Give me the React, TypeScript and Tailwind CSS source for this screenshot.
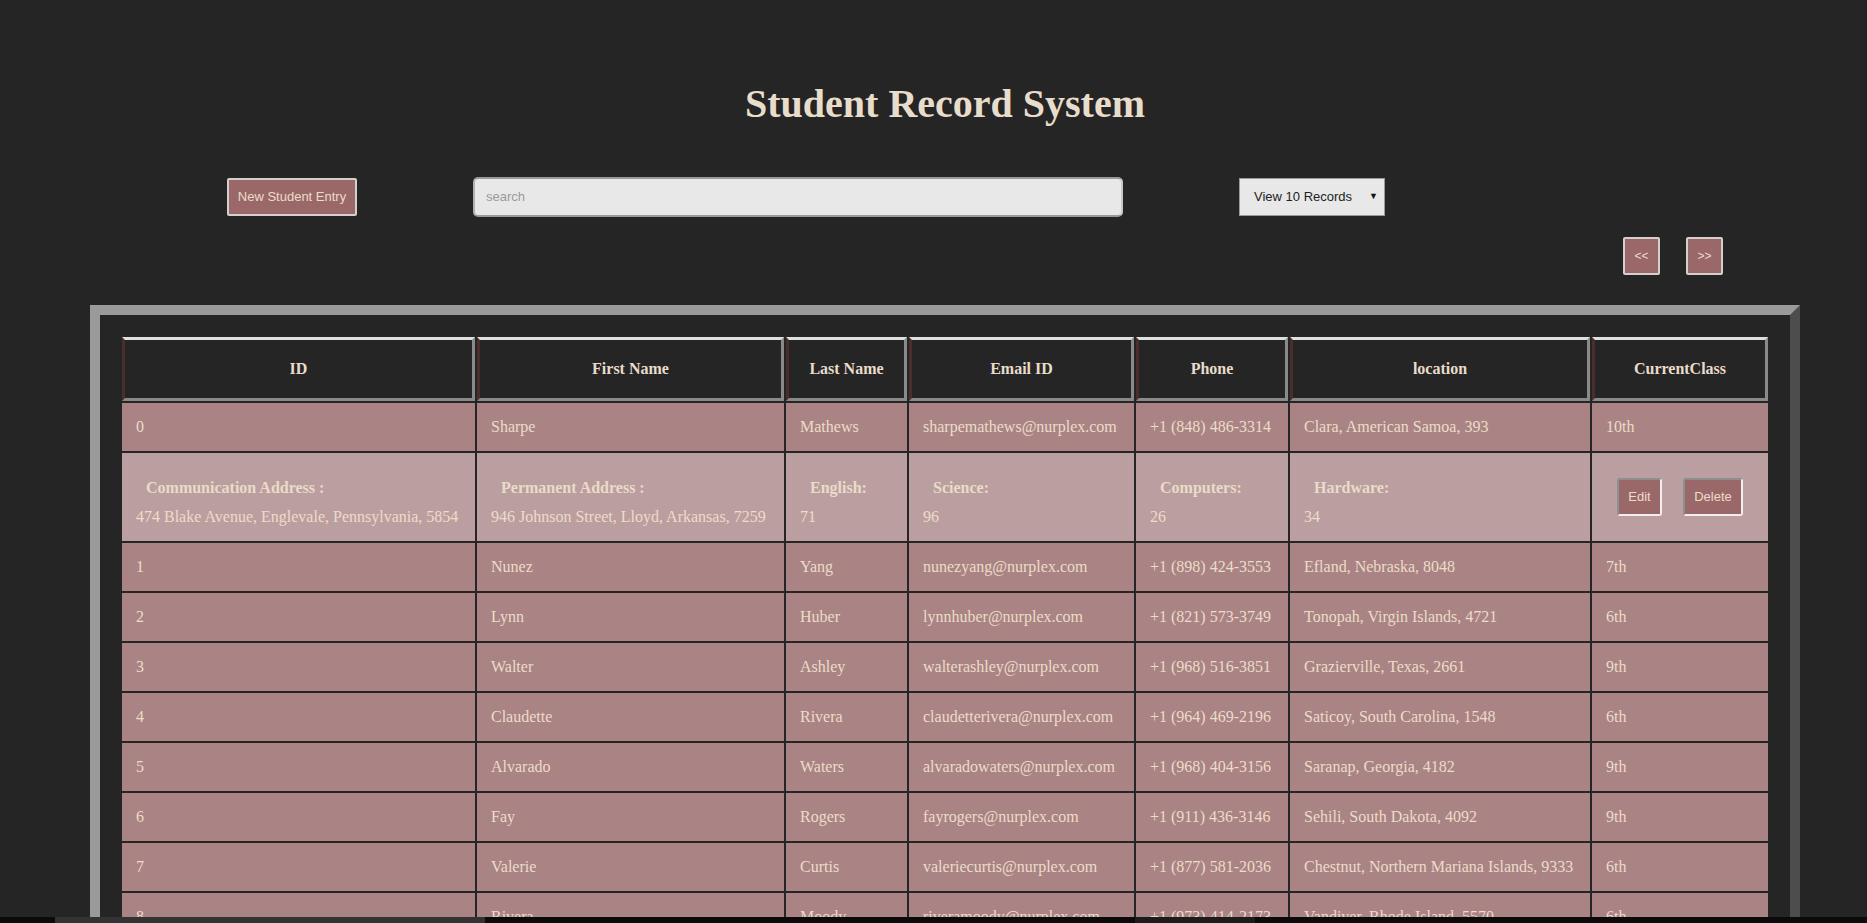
import React from "react";

const serif = { fontFamily: '"Liberation Serif", "Times New Roman", serif' };
const sans = { fontFamily: '"Liberation Sans", Arial, sans-serif' };

type Row = [string, string, string, string, string, string, string];

const rows: Row[] = [
  ["0", "Sharpe", "Mathews", "sharpemathews@nurplex.com", "+1 (848) 486-3314", "Clara, American Samoa, 393", "10th"],
  ["1", "Nunez", "Yang", "nunezyang@nurplex.com", "+1 (898) 424-3553", "Efland, Nebraska, 8048", "7th"],
  ["2", "Lynn", "Huber", "lynnhuber@nurplex.com", "+1 (821) 573-3749", "Tonopah, Virgin Islands, 4721", "6th"],
  ["3", "Walter", "Ashley", "walterashley@nurplex.com", "+1 (968) 516-3851", "Grazierville, Texas, 2661", "9th"],
  ["4", "Claudette", "Rivera", "claudetterivera@nurplex.com", "+1 (964) 469-2196", "Saticoy, South Carolina, 1548", "6th"],
  ["5", "Alvarado", "Waters", "alvaradowaters@nurplex.com", "+1 (968) 404-3156", "Saranap, Georgia, 4182", "9th"],
  ["6", "Fay", "Rogers", "fayrogers@nurplex.com", "+1 (911) 436-3146", "Sehili, South Dakota, 4092", "9th"],
  ["7", "Valerie", "Curtis", "valeriecurtis@nurplex.com", "+1 (877) 581-2036", "Chestnut, Northern Mariana Islands, 9333", "6th"],
  ["8", "Rivera", "Moody", "riveramoody@nurplex.com", "+1 (973) 414-2173", "Vandiver, Rhode Island, 5570", "6th"],
  ["9", "Hester", "Bond", "hesterbond@nurplex.com", "+1 (990) 512-3318", "Tuskahoma, Ohio, 6012", "8th"],
];

const headers = ["ID", "First Name", "Last Name", "Email ID", "Phone", "location", "CurrentClass"];

const details: [string, string][] = [
  ["Communication Address :", "474 Blake Avenue, Englevale, Pennsylvania, 5854"],
  ["Permanent Address :", "946 Johnson Street, Lloyd, Arkansas, 7259"],
  ["English:", "71"],
  ["Science:", "96"],
  ["Computers:", "26"],
  ["Hardware:", "34"],
];

function DataRow({ r }: { r: Row }) {
  return (
    <tr>
      {r.map((c, i) => (
        <td
          key={i}
          className="h-[48px] whitespace-nowrap bg-[#aa8384] px-[14px] py-0 align-middle text-[16px] text-[#ecdcc9]"
        >
          {c}
        </td>
      ))}
    </tr>
  );
}

export default function App() {
  return (
    <div className="h-screen overflow-hidden bg-[#252525] pl-[23px]">
      <h1
        className="pt-[81px] text-center text-[40px] font-bold leading-[46px] text-[#e8dccb]"
        style={serif}
      >
        Student Record System
      </h1>

      <div className="mt-[50px] flex h-[40px] items-center" style={sans}>
        <button className="ml-[204px] h-[38px] w-[130px] rounded-[2px] border-2 border-[#d6d0cc] bg-[#9a6869] text-[13px] text-[#ecdcc9]">
          New Student Entry
        </button>
        <div className="ml-[116px] flex h-[40px] w-[650px] items-center rounded-[5px] border-2 border-t-[#9a9a9a] border-l-[#b0b0b0] border-r-[#c8c8c8] border-b-[#9a9a9a] bg-[#e8e8e8] pl-[11px] text-[13px] text-[#9a9a9a]">
          search
        </div>
        <div className="ml-[116px] flex h-[38px] w-[146px] items-center justify-between border border-[#9a9a9a] bg-[#e8e8e8] pl-[14px] pr-[6px] text-[13px] text-[#222]">
          <span>View 10 Records</span>
          <span className="text-[9px] text-[#111]">▼</span>
        </div>
      </div>

      <div className="mt-[20px] flex justify-end gap-[26px] pr-[144px]" style={sans}>
        <button className="h-[38px] w-[37px] rounded-[2px] border-2 border-[#d6d0cc] bg-[#9a6869] text-[12px] text-[#ecdcc9]">
          &lt;&lt;
        </button>
        <button className="h-[38px] w-[37px] rounded-[2px] border-2 border-[#d6d0cc] bg-[#9a6869] text-[12px] text-[#ecdcc9]">
          &gt;&gt;
        </button>
      </div>

      <div className="mx-auto mt-[30px] w-[1710px] border-[10px] border-t-[#9a9a9a] border-l-[#9a9a9a] border-r-[#4d4d4d] border-b-[#4d4d4d] bg-[#252525] p-[20px]">
        <table className="w-full table-fixed border-separate border-spacing-[2px]" style={serif}>
          <colgroup>
            <col className="w-[353px]" />
            <col className="w-[307px]" />
            <col className="w-[121px]" />
            <col className="w-[225px]" />
            <col className="w-[152px]" />
            <col className="w-[300px]" />
            <col className="w-[176px]" />
          </colgroup>
          <thead>
            <tr>
              {headers.map((h) => (
                <th
                  key={h}
                  className="h-[64px] border-[3px] border-t-[#e0e0e0] border-l-[#4b2d2d] border-r-[#8a8a8a] border-b-[#8a8a8a] bg-[#252525] text-center align-middle text-[16px] font-bold text-[#e8dccb]"
                >
                  {h}
                </th>
              ))}
            </tr>
          </thead>
          <tbody>
            <DataRow r={rows[0]} />
            <tr>
              {details.map(([label, value]) => (
                <td
                  key={label}
                  className="h-[88px] whitespace-nowrap bg-[#bb9fa0] px-[14px] pt-[10px] pb-0 align-middle"
                >
                  <div className="pl-[10px] text-[16px] font-bold leading-[20px] text-[#eadbc8]">{label}</div>
                  <div className="mt-[9px] text-[16px] leading-[20px] text-[#ecdcc9]">{value}</div>
                </td>
              ))}
              <td className="h-[88px] bg-[#bb9fa0] px-0 py-0 align-middle">
                <div className="flex items-center justify-center gap-[21px]" style={sans}>
                  <button className="h-[38px] w-[45px] rounded-[3px] border-2 border-t-[#8e8e8e] border-l-[#8e8e8e] border-r-[#f2efec] border-b-[#f2efec] bg-[#9a6869] text-[13px] text-[#ecdcc9]">
                    Edit
                  </button>
                  <button className="h-[38px] w-[60px] rounded-[3px] border-2 border-t-[#8e8e8e] border-l-[#8e8e8e] border-r-[#f2efec] border-b-[#f2efec] bg-[#9a6869] text-[13px] text-[#ecdcc9]">
                    Delete
                  </button>
                </div>
              </td>
            </tr>
            {rows.slice(1).map((r) => (
              <DataRow key={r[0]} r={r} />
            ))}
          </tbody>
        </table>
      </div>

      <div className="fixed bottom-0 left-0 right-0 flex h-[6px] bg-[#0b0b0b]">
        <div className="ml-[55px] h-full w-[430px] bg-[#333333]" />
        <div className="ml-[650px] h-full w-[120px] bg-[#1c1c1c]" />
      </div>
    </div>
  );
}
